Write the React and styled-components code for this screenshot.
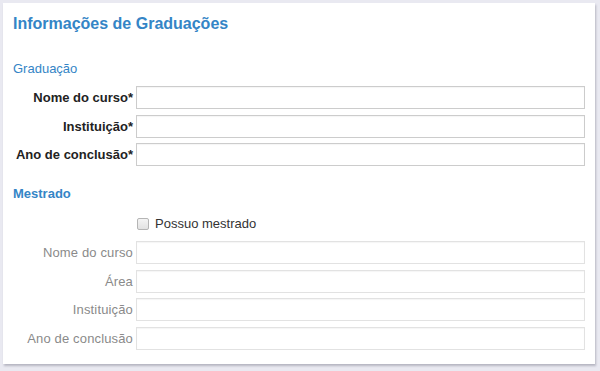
import React from "react";
import styled, { createGlobalStyle } from "styled-components";

const Global = createGlobalStyle`
  html, body { margin: 0; padding: 0; background: #e9e9f1; }
  body { font-family: "Liberation Sans", Arial, sans-serif; }
`;

const Page = styled.div`
  padding: 3px 5px 0 3px;
  width: 600px;
  height: 371px;
  box-sizing: border-box;
`;

const Card = styled.div`
  background: #fff;
  height: 361px;
  box-sizing: border-box;
  padding: 11px 10px 0 10px;
  box-shadow: 1px 2px 2px rgba(90, 90, 110, 0.35);
`;

const Title = styled.h1`
  margin: 0;
  font-size: 16px;
  line-height: 19px;
  font-weight: bold;
  color: #3485c6;
`;

const Section = styled.h2`
  margin: ${(p) => p.$mt}px 0 0 0;
  font-size: 13px;
  line-height: 15px;
  font-weight: ${(p) => (p.$bold ? "bold" : "normal")};
  color: #3485c6;
`;

const Rows = styled.div`
  display: flex;
  flex-direction: column;
  gap: 5.5px;
  margin-top: ${(p) => p.$mt}px;
`;

const Row = styled.div`
  display: grid;
  grid-template-columns: 120px 1fr;
  column-gap: 3px;
  align-items: center;
`;

const Label = styled.label`
  text-align: right;
  font-size: 13px;
  font-weight: ${(p) => (p.$disabled ? "normal" : "bold")};
  color: ${(p) => (p.$disabled ? "#8a8a8a" : "#222")};
  letter-spacing: ${(p) => (p.$disabled ? "0.15px" : "0")};
  white-space: nowrap;
`;

const Input = styled.input`
  height: 23px;
  box-sizing: border-box;
  border: 1px solid ${(p) => (p.disabled ? "#e2e2e2" : "#cccccc")};
  box-shadow: inset 0 1px 1px rgba(0, 0, 0, 0.04);
  background: #fff;
  margin: 0;
  padding: 0 4px;
  width: 100%;
`;

const CheckRow = styled.label`
  display: flex;
  align-items: center;
  gap: 6px;
  margin: 15px 0 10px 124px;
  font-size: 13px;
  color: #333;
`;

const Box = styled.span`
  width: 12px;
  height: 12px;
  box-sizing: border-box;
  border: 1px solid #b5b5b5;
  border-radius: 2px;
  background: linear-gradient(#f4f4f4, #e2e2e2);
`;

const graduacao = ["Nome do curso*", "Instituição*", "Ano de conclusão*"];
const mestrado = ["Nome do curso", "Área", "Instituição", "Ano de conclusão"];

export default function App() {
  return (
    <>
      <Global />
      <Page>
        <Card>
          <Title>Informações de Graduações</Title>
          <Section $mt={28}>Graduação</Section>
          <Rows $mt={10}>
            {graduacao.map((l) => (
              <Row key={l}>
                <Label>{l}</Label>
                <Input />
              </Row>
            ))}
          </Rows>
          <Section $mt={20} $bold>Mestrado</Section>
          <CheckRow>
            <Box />
            Possuo mestrado
          </CheckRow>
          <Rows $mt={0}>
            {mestrado.map((l) => (
              <Row key={l}>
                <Label $disabled>{l}</Label>
                <Input disabled />
              </Row>
            ))}
          </Rows>
        </Card>
      </Page>
    </>
  );
}
